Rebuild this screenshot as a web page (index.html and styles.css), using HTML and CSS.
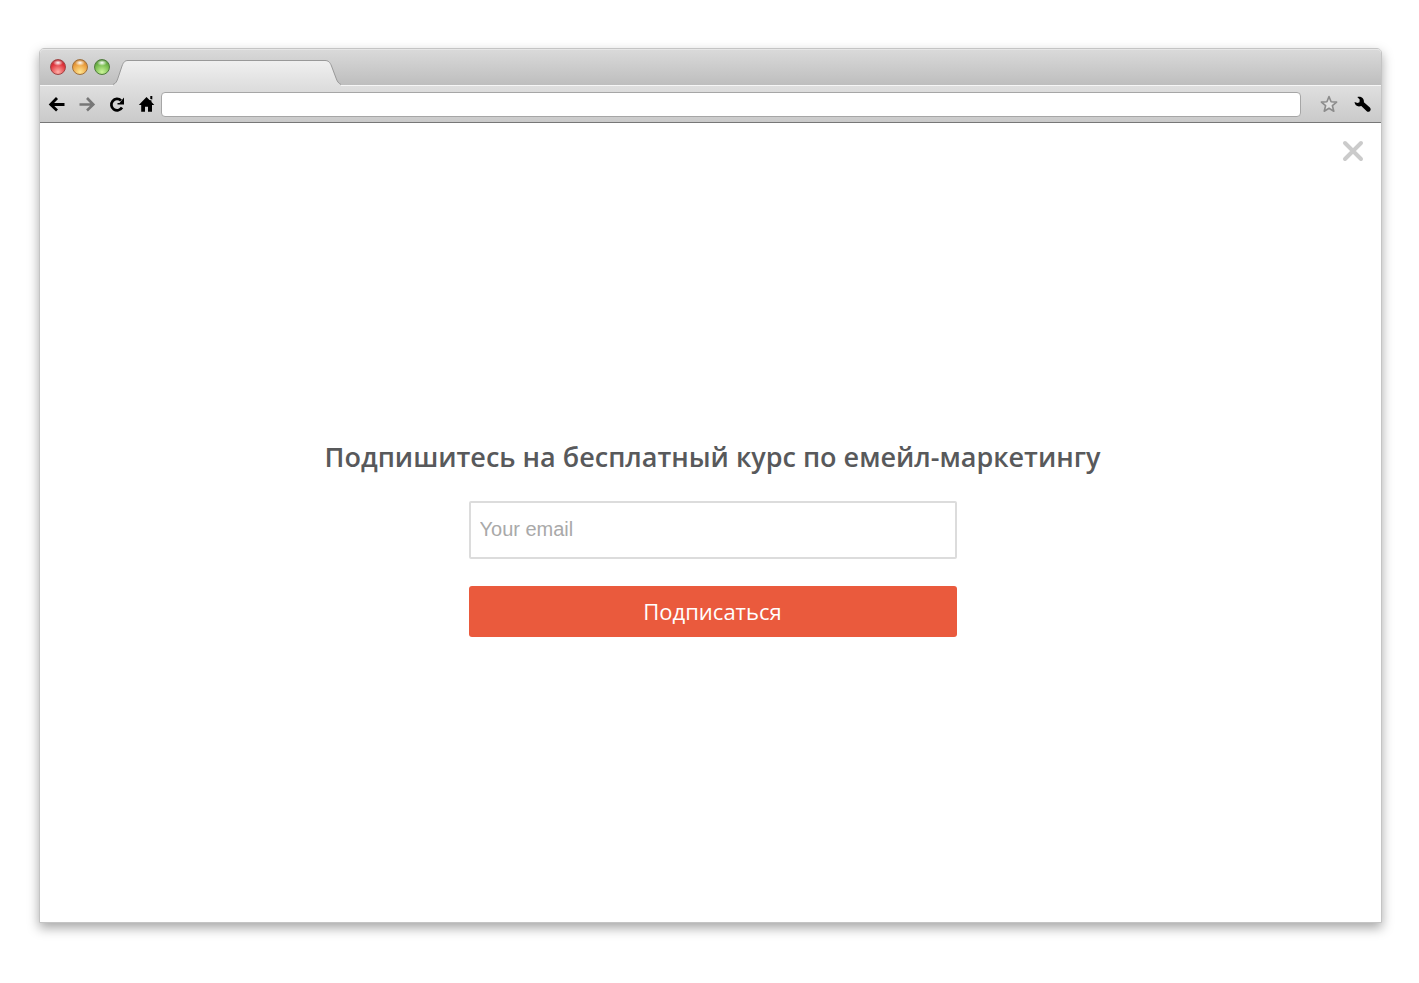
FILE: index.html
```html
<!DOCTYPE html>
<html lang="ru">
<head>
  <meta charset="UTF-8" />
  <meta name="viewport" content="width=device-width, initial-scale=1.0" />
  <title>Подписка на курс</title>
  <link rel="stylesheet" href="styles.css">
</head>
<body>

  <div class="browser">

    <!-- Tab strip -->
    <div class="tab-strip">
      <div class="lights">
        <span class="light red"></span>
        <span class="light yellow"></span>
        <span class="light green"></span>
      </div>
      <svg class="tab" viewBox="0 0 228 27" aria-hidden="true">
        <defs>
          <linearGradient id="tabFill" x1="0" y1="0" x2="0" y2="1">
            <stop offset="0" stop-color="#f0f0f0" />
            <stop offset="1" stop-color="#dfdfdf" />
          </linearGradient>
        </defs>
        <path d="M0 27V25.500C3 24.500 4 22 5 19L9 7C10.500 3 12 1.500 15 1.500H212C215 1.500 217 3 218.500 7L223 19C224 22 225.500 24.500 228 25.500V27Z" fill="url(#tabFill)" />
        <path d="M0 25.500C3 24.500 4 22 5 19L9 7C10.500 3 12 1.500 15 1.500H212C215 1.500 217 3 218.500 7L223 19C224 22 225.500 24.500 228 25.500" fill="none" stroke="#999" />
      </svg>
    </div>

    <!-- Toolbar -->
    <div class="toolbar">
      <div class="nav">
        <button type="button" class="icon-btn" aria-label="Назад">
          <svg viewBox="0 0 18 18"><path d="M9 3L2.700 9.500l6.300 6M3.500 9.500H16.500" fill="none" stroke="#000" stroke-width="2.800" /></svg>
        </button>
        <button type="button" class="icon-btn" aria-label="Вперёд">
          <svg viewBox="0 0 18 18"><path d="M9 3l6.300 6.500-6.300 6M14.500 9.500H1.500" fill="none" stroke="#777" stroke-width="2.600" /></svg>
        </button>
        <button type="button" class="icon-btn" aria-label="Обновить">
          <svg viewBox="0 0 18 18"><path d="M13 5.500A5.700 5.700 0 1 0 14 12.500" fill="none" stroke="#000" stroke-width="2.700" /><path d="M16 2.500v7H9.500v-1.500h2z" /></svg>
        </button>
        <button type="button" class="icon-btn" aria-label="Домой">
          <svg viewBox="0 0 18 18"><path d="M8.500 2L.8 10h2.400v6.700H7v-5h3v5h4V10h2.300l-2.800-3V5.500L11.500 5zM12.300 1h2v3.500l-2-.6z" /></svg>
        </button>
      </div>
      <input type="text" class="address" aria-label="Адрес" />
      <div class="tools">
        <button type="button" class="icon-btn" aria-label="Закладка">
          <svg viewBox="0 0 18 18"><path d="M9 1.600l2.100 5.100 5.500.4-4.200 3.600 1.400 5.500L9 13.200l-4.800 3 1.400-5.500L1.400 7.100l5.500-.4z" fill="#e0e0e0" stroke="#8c8c8c" stroke-width="1.600" stroke-linejoin="round" /></svg>
        </button>
        <button type="button" class="icon-btn" aria-label="Настройки">
          <svg viewBox="0 0 18 18"><path d="M4.300 2C7.800.9 11.300 3 10.900 7.200l6 5.300c1.300 1.400.8 3.200-.4 3.900-1 .6-2.200.4-3-.5L8.300 10.900C4.800 12.300 1.800 10.500 1.500 7l3 1 2-.8L6.700 4.600z" /></svg>
        </button>
      </div>
    </div>

    <!-- Page -->
    <main class="page">
      <button type="button" class="close-btn" aria-label="Закрыть">
        <svg viewBox="0 0 22 22"><path d="M3 3l16 16M19 3L3 19" stroke="#cbcbcb" stroke-width="4" stroke-linecap="round" /></svg>
      </button>

      <form class="subscribe">
        <h1>Подпишитесь на бесплатный курс по емейл-маркетингу</h1>
        <input type="email" class="email" placeholder="Your email" aria-label="Your email" />
        <button type="submit" class="btn">Подписаться</button>
      </form>
    </main>

  </div>

</body>
</html>
```
FILE: styles.css
```css
* {
  margin: 0;
  padding: 0;
  box-sizing: border-box;
}

body {
  min-height: 100vh;
  padding: 48px 37px 60px 39px;
  background: #fff;
  font-family: 'Open Sans', 'Noto Sans', sans-serif;
  display: flex;
}

button {
  border: none;
  background: none;
  cursor: pointer;
}

svg {
  display: block;
}

.browser {
  flex: 1;
  display: flex;
  flex-direction: column;
  border: 1px solid #c4c4c4;
  border-radius: 5px 5px 0 0;
  background: #fff;
  box-shadow: 0 5px 12px rgba(0, 0, 0, 0.35);
}

/* Tab strip */
.tab-strip {
  height: 36px;
  padding-left: 10px;
  display: flex;
  align-items: flex-end;
  gap: 3px;
  border-radius: 4px 4px 0 0;
  background: linear-gradient(#dadada, #bebebe);
  box-shadow: inset 0 1px 0 #e6e6e6;
}

.lights {
  display: flex;
  gap: 6px;
  padding-bottom: 10px;
}

.light {
  width: 16px;
  height: 16px;
  border: 1px solid #777;
  border-radius: 50%;
}

.red {
  border-color: #a04444;
  background: radial-gradient(ellipse 5px 3px at 50% 20%, #fff, transparent), radial-gradient(circle at 50% 85%, #ffb0a8, #e0343c 60%, #a82028);
}

.yellow {
  border-color: #a0703c;
  background: radial-gradient(ellipse 5px 3px at 50% 20%, #fff, transparent), radial-gradient(circle at 50% 85%, #ffe690, #eb9e3e 60%, #b06a20);
}

.green {
  border-color: #507c3c;
  background: radial-gradient(ellipse 5px 3px at 50% 20%, #fff, transparent), radial-gradient(circle at 50% 85%, #ccf59a, #72b84a 60%, #3f7a2a);
}

.tab {
  width: 228px;
  height: 27px;
  margin-bottom: -1px;
  position: relative;
}

/* Toolbar */
.toolbar {
  height: 38px;
  padding: 0 10px 0 8px;
  display: flex;
  align-items: center;
  gap: 5px;
  border-top: 1px solid #f6f6f6;
  border-bottom: 1px solid #777;
  background: linear-gradient(#dfdfdf, #cacaca);
}

.nav {
  display: flex;
  gap: 12px;
}

.tools {
  display: flex;
  gap: 15px;
  margin-left: 14px;
}

.icon-btn,
.icon-btn svg {
  width: 18px;
  height: 18px;
}

.address {
  flex: 1;
  min-width: 0;
  height: 25px;
  padding: 0 8px;
  border: 1px solid #a6a6a6;
  border-radius: 4px;
  background: #fff;
  font-size: 14px;
  outline: none;
}

/* Page */
.page {
  flex: 1;
  position: relative;
  padding: 24px 16px 0 20px;
  display: flex;
  justify-content: center;
  align-items: center;
}

.close-btn {
  position: absolute;
  top: 17px;
  right: 17px;
}

.close-btn svg {
  width: 22px;
  height: 22px;
}

.subscribe {
  display: flex;
  flex-direction: column;
  align-items: center;
}

.subscribe h1 {
  margin-bottom: 20px;
  font-size: 27px;
  font-weight: 600;
  line-height: 48px;
  color: #58595b;
  text-align: center;
}

.email {
  width: 488px;
  max-width: 100%;
  height: 58px;
  margin-bottom: 27px;
  padding: 0 9px;
  border: 2px solid #dcdcdc;
  border-radius: 2px;
  font-family: 'Liberation Sans', Arial, sans-serif;
  font-size: 20px;
  color: #58595b;
  outline: none;
}

.email::placeholder {
  color: #a9a9a9;
}

.btn {
  width: 488px;
  max-width: 100%;
  height: 51px;
  border-radius: 3px;
  background-color: #ea5a3d;
  color: #fff;
  font-family: inherit;
  font-size: 22px;
}

.btn:hover {
  background-color: #d94c30;
}
```
